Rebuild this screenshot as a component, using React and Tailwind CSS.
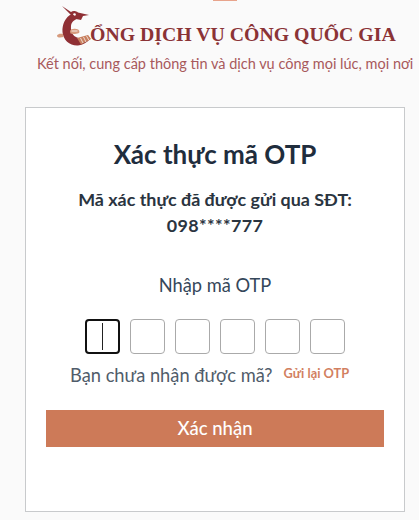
import React from 'react';

const Logo = () => (
  <svg width="36" height="42" viewBox="0 0 36 42" className="shrink-0">
    {/* beak and neck */}
    <path d="M6 0 L15 6 C17 4.5 20 5 22 6.5 L33 9 L27 10 L25 14 L20 13 L16 10 Z" fill="#8f2f34" />
    <circle cx="18.5" cy="8.5" r="1.3" fill="#fff" />
    {/* body of the C */}
    <path d="M16 8 C9 11 6 19 6.5 26 C7 34 14 40 22 39.5 C27 39 31 36 34.5 33 L32 29.5 C28 32 24 33 21 31.5 C17 30 14.5 26 15 20 C15.5 16 18 14 22 12.5 Z" fill="#8f2f34" />
    <path d="M21 32 L32 29 L35 33 L25 38.5 Z" fill="#c8805f" />
    <path d="M24.5 32 L27 37 M27.5 31 L30 36 M30.5 30 L33 34.5" stroke="#fff" strokeWidth="0.7" />
    {/* clouds */}
    <path d="M1 29.5 C2 27.5 5 27.5 7 28 L7.5 31 L4 31.5 C2 31.5 1 31 1 29.5 Z" fill="#d69a7c" />
    <path d="M14 25.5 C14 23 18 22.5 20 23 C23 23 24 25.5 23 27 C19 28.5 16 28 14.5 27.5 Z" fill="#d69a7c" />
    <path d="M15.5 25 H21.5" stroke="#fff" strokeWidth="0.8" />
  </svg>
);

const OtpBox = ({ active }) => (
  <div
    className={
      active
        ? 'w-[35px] h-[35px] rounded-[4px] border-2 border-[#111] bg-white flex items-center justify-center'
        : 'w-[35px] h-[35px] rounded-[4px] border border-[#aaa] bg-white'
    }
  >
    {active && <div className="w-px h-[27px] bg-[#222]" />}
  </div>
);

export default function App() {
  return (
    <div className="relative w-[419px] h-[520px] overflow-hidden bg-[#fafafa] font-['Lato',sans-serif]">
      <div className="absolute left-[213px] top-0 w-[24px] h-px bg-[#e8a48c]" />

      {/* header */}
      <div className="h-[107px] pt-[6px]">
        <div className="flex items-start pl-[56px]">
          <Logo />
          <div className="-ml-[2px] mt-[15px] font-['Liberation_Serif',serif] font-bold text-[19.8px] leading-[26px] text-[#8b3336] whitespace-nowrap">
            ỔNG DỊCH VỤ CÔNG QUỐC GIA
          </div>
        </div>
        <div className="mt-[6px] pl-[37px] text-[14.5px] leading-[20px] text-[#a8595c] whitespace-nowrap">
          Kết nối, cung cấp thông tin và dịch vụ công mọi lúc, mọi nơi
        </div>
      </div>

      {/* card */}
      <div className="ml-[25px] w-[380px] h-[405px] border border-[#c8cacc] bg-white px-[20px] pt-[28px] flex flex-col items-center">
        <h1 className="text-[26px] leading-[36px] font-bold text-[#1f2d3d] whitespace-nowrap">Xác thực mã OTP</h1>
        <p className="mt-[14px] text-center text-[17.9px] leading-[26px] font-bold text-[#2a3440] whitespace-nowrap">
          Mã xác thực đã được gửi qua SĐT:
          <br />
          <span className="tracking-[0.4px]">098****777</span>
        </p>
        <div className="mt-[35px] text-[18.3px] leading-[24px] text-[#35475a]">Nhập mã OTP</div>
        <div className="mt-[22px] flex gap-[10px]">
          <OtpBox active />
          <OtpBox />
          <OtpBox />
          <OtpBox />
          <OtpBox />
          <OtpBox />
        </div>
        <div className="mt-[8px] w-full flex items-center pl-[24px]">
          <span className="text-[18.3px] leading-[26px] text-[#505c6a] whitespace-nowrap">Bạn chưa nhận được mã?</span>
          <span className="ml-[11px] -mt-[3px] text-[12.8px] font-bold text-[#d27f61] whitespace-nowrap">Gửi lại OTP</span>
        </div>
        <button className="mt-[22px] w-[338px] h-[37px] bg-[#cd7a58] text-white text-[18.5px] font-medium">
          Xác nhận
        </button>
      </div>
    </div>
  );
}
